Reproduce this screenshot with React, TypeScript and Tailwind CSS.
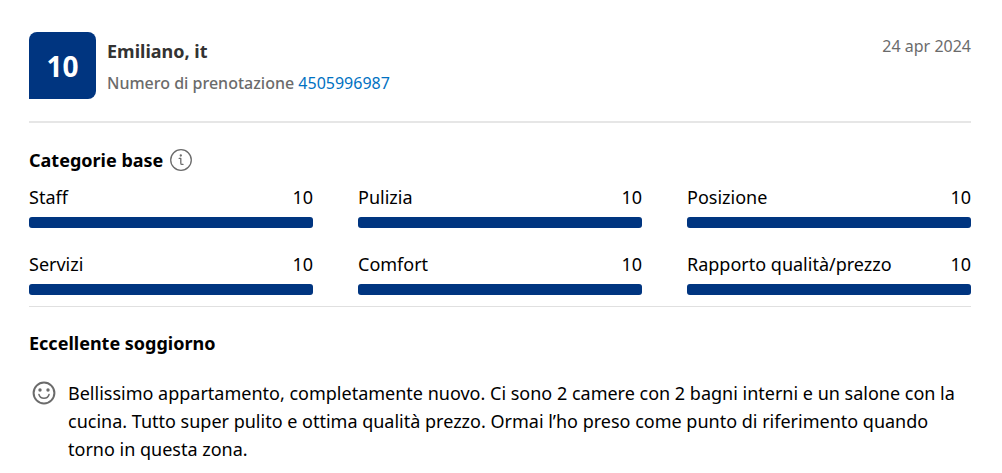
interface CategoryScore {
  label: string;
  score: number;
}

const CATEGORIES: CategoryScore[] = [
  { label: "Staff", score: 10 },
  { label: "Pulizia", score: 10 },
  { label: "Posizione", score: 10 },
  { label: "Servizi", score: 10 },
  { label: "Comfort", score: 10 },
  { label: "Rapporto qualità/prezzo", score: 10 },
];

const MAX_SCORE = 10;

function InfoIcon() {
  return (
    <svg
      viewBox="0 0 24 24"
      className="size-6"
      fill="none"
      stroke="#6b6b6b"
      strokeWidth="1.3"
      strokeLinecap="round"
      strokeLinejoin="round"
      aria-hidden="true"
    >
      <circle cx="12" cy="12" r="10.3" />
      <path d="M10.2 10.4h1.6v4.800q0 1.200 1.200 1.200h1" />
      <circle cx="11.8" cy="7.5" r="0.5" fill="#6b6b6b" />
    </svg>
  );
}

function SmileIcon() {
  return (
    <svg viewBox="0 0 24 24" className="size-6 shrink-0" aria-hidden="true">
      <circle
        cx="12"
        cy="12"
        r="10.4"
        fill="none"
        stroke="#6b6b6b"
        strokeWidth="2"
      />
      <circle cx="8" cy="9" r="1.7" fill="#6b6b6b" />
      <circle cx="16" cy="9" r="1.7" fill="#6b6b6b" />
      <path
        d="M7 13.6c.6 2.2 2.6 3.6 5 3.6s4.400-1.400 5-3.600"
        fill="none"
        stroke="#6b6b6b"
        strokeWidth="1.600"
        strokeLinecap="round"
      />
    </svg>
  );
}

function CategoryBar({ label, score }: CategoryScore) {
  return (
    <li>
      <div className="flex justify-between">
        <span>{label}</span>
        <span>{score}</span>
      </div>
      <div className="mt-[6px] h-[11px] rounded-[3px] bg-gray-200">
        <div
          className="h-full rounded-[3px] bg-[#003580]"
          style={{ width: `${(score / MAX_SCORE) * 100}%` }}
        />
      </div>
    </li>
  );
}

export default function App() {
  return (
    <article className="bg-white pt-8 pr-[31px] pb-2 pl-[29px] font-['Noto_Sans',sans-serif] text-[18px] leading-7 text-black">
      <header className="flex items-start border-b-2 border-[#e6e6e6] pb-[22px]">
        <div className="flex size-[67px] items-center justify-center rounded-lg rounded-bl-none bg-[#003580] text-[28px] font-bold text-white">
          10
        </div>
        <div className="ml-[11px] pt-[3px] text-[16px] leading-8 text-[#6b6b6b]">
          <h1 className="text-[18px] font-bold text-[#333333]">Emiliano, it</h1>
          <p>
            <span className="font-medium">Numero di prenotazione</span>{" "}
            <a href="#prenotazione" className="text-[#0071c2]">
              4505996987
            </a>
          </p>
        </div>
        <time
          dateTime="2024-04-24"
          className="ml-auto text-[16px] text-[#6b6b6b]"
        >
          24 apr 2024
        </time>
      </header>

      <section className="border-b border-[#e0e0e0] pt-[23px] pb-[11px]">
        <div className="flex items-center gap-[6px]">
          <h2 className="font-bold">Categorie base</h2>
          <button type="button" aria-label="Informazioni sulle categorie">
            <InfoIcon />
          </button>
        </div>
        <ul className="mt-[9px] grid grid-cols-3 gap-x-[45px] gap-y-[22px]">
          {CATEGORIES.map((category) => (
            <CategoryBar key={category.label} {...category} />
          ))}
        </ul>
      </section>

      <section className="pt-[22px]">
        <h2 className="font-bold">Eccellente soggiorno</h2>
        <div className="mt-[22px] flex gap-3">
          <div className="flex h-7 items-center pl-[3px]">
            <SmileIcon />
          </div>
          <p>
            Bellissimo appartamento, completamente nuovo. Ci sono 2 camere con 2
            bagni interni e un salone con la cucina. Tutto super pulito e ottima
            qualità prezzo. Ormai l’ho preso come punto di riferimento quando
            torno in questa zona.
          </p>
        </div>
      </section>
    </article>
  );
}
